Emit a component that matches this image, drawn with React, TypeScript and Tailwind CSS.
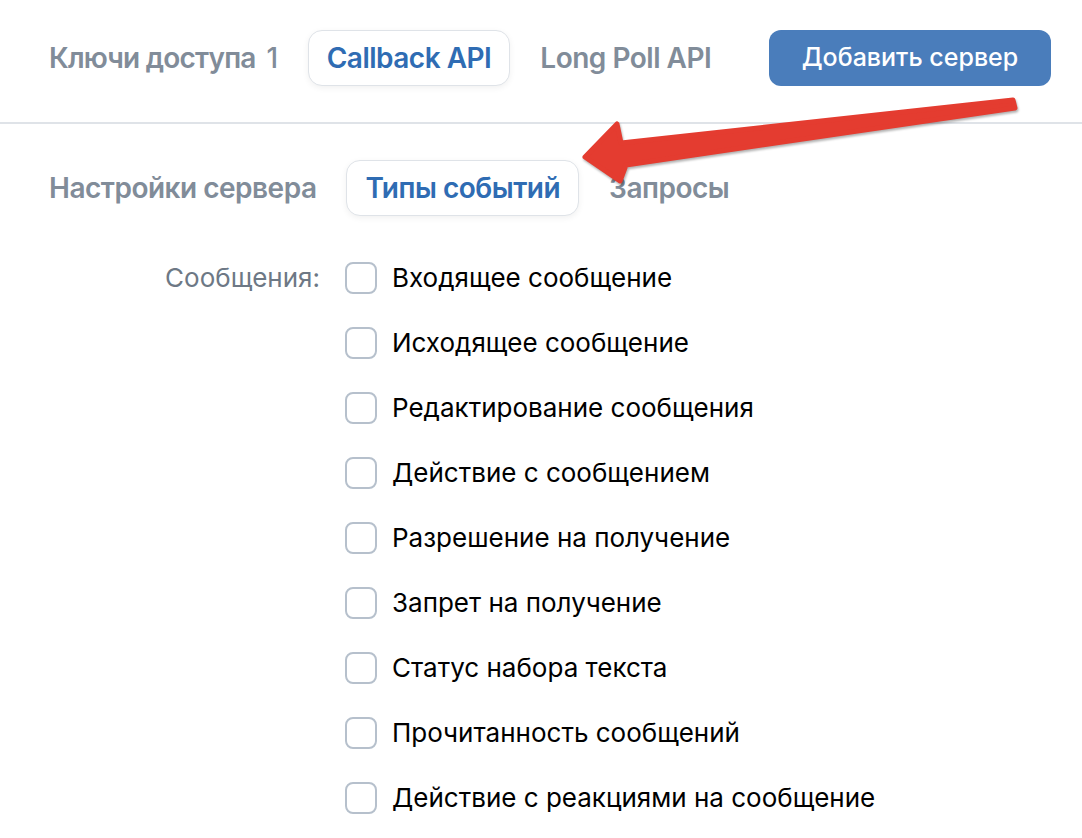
import React from 'react';

const events = [
  'Входящее сообщение',
  'Исходящее сообщение',
  'Редактирование сообщения',
  'Действие с сообщением',
  'Разрешение на получение',
  'Запрет на получение',
  'Статус набора текста',
  'Прочитанность сообщений',
  'Действие с реакциями на сообщение',
];

const Tab: React.FC<{ active?: boolean; children: React.ReactNode }> = ({ active, children }) => (
  <div
    className={
      'flex items-center h-[56px] px-[18px] rounded-[14px] border text-[28px] font-semibold tracking-[-0.5px] ' +
      (active
        ? 'bg-white border-[#dfe3e8] text-[#2f6cb3] shadow-[0_2px_6px_rgba(0,0,0,0.06)]'
        : 'border-transparent text-[#818c99]')
    }
  >
    {children}
  </div>
);

const Arrow: React.FC = () => (
  <svg
    className="absolute left-0 top-0 pointer-events-none"
    width="1082"
    height="838"
    style={{ filter: 'drop-shadow(1px 2px 1px rgba(0,0,0,0.3))' }}
  >
    <polygon
      points="585,157 617,124 621,143 1013,100 1015,108 626,165 620,181"
      fill="#e43c30"
      stroke="#e43c30"
      strokeWidth="5"
      strokeLinejoin="round"
    />
  </svg>
);

export default function App() {
  return (
    <div className="relative w-[1082px] h-[838px] overflow-hidden bg-white font-['Inter',sans-serif]">
      {/* top tabs */}
      <div className="flex items-center justify-between pl-[30px] pr-[31px] pt-[30px] pb-[36px] border-b-2 border-[#dfe3e8]">
        <div className="flex items-center gap-[11px]">
          <Tab>
            <span className="tracking-[-0.8px]">Ключи доступа</span>
            <span className="ml-[11px] font-medium">1</span>
          </Tab>
          <Tab active>Callback API</Tab>
          <Tab>Long Poll API</Tab>
        </div>
        <button className="h-[56px] w-[282px] rounded-[12px] bg-[#4a7dbb] text-white text-[25px] font-medium">
          Добавить сервер
        </button>
      </div>

      {/* sub tabs */}
      <div className="flex items-center gap-[11px] pl-[30px] pt-[36px]">
        <Tab>Настройки сервера</Tab>
        <Tab active>Типы событий</Tab>
        <Tab>Запросы</Tab>
      </div>

      {/* event list */}
      <div className="flex pl-[30px] pt-[29px]">
        <div className="w-[290px] h-[65px] flex items-center justify-end text-[26px] text-[#6d7885]">
          Сообщения:
        </div>
        <div className="flex flex-col ml-[25px]">
          {events.map((e) => (
            <label key={e} className="h-[65px] flex items-center gap-[15px] text-[26px] text-black">
              <span className="w-[32px] h-[32px] rounded-[8px] border-2 border-[#b6c0cc] bg-white" />
              {e}
            </label>
          ))}
        </div>
      </div>

      <Arrow />
    </div>
  );
}
